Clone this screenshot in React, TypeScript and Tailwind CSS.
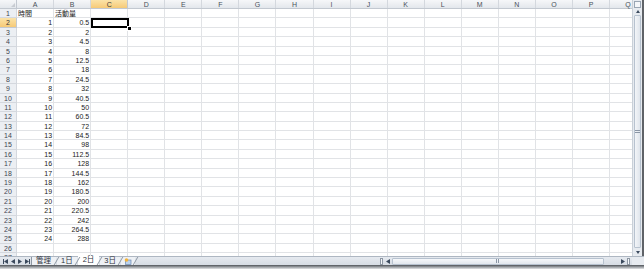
import React from "react";

const COLS = ["A", "B", "C", "D", "E", "F", "G", "H", "I", "J", "K", "L", "M", "N", "O", "P", "Q"];

function cellValue(row: number, col: number): string {
  if (row === 1) {
    if (col === 0) return "時間";
    if (col === 1) return "活動量";
    return "";
  }
  const n = row - 1;
  if (n > 24) return "";
  if (col === 0) return String(n);
  if (col === 1) return String(0.5 * n * n);
  return "";
}

function Tri({ dir }: { dir: "l" | "r" }) {
  return (
    <svg width="4" height="5" viewBox="0 0 4 5">
      {dir === "l" ? <path d="M4 0 L0 2.5 L4 5Z" fill="#3b4a5e" /> : <path d="M0 0 L4 2.5 L0 5Z" fill="#3b4a5e" />}
    </svg>
  );
}

export default function App() {
  const rows = Array.from({ length: 27 }, (_, i) => i + 1);

  return (
    <div className="w-[644px] h-[269px] overflow-hidden bg-white flex flex-col font-['Liberation_Sans','Noto_Sans_CJK_JP',sans-serif] text-[7px] text-[#1a1a1a]">
      <div className="flex h-[256px]">
        {/* GRID */}
        <div className="relative w-[632px] overflow-hidden">
          {/* column headers */}
          <div className="flex h-[9px] bg-gradient-to-b from-[#f6f7f9] to-[#e3e7ec] border-b border-[#c2c8d0]">
            <div className="w-[17px] shrink-0 border-r border-[#c2c8d0] flex items-end justify-end pr-[1px] pb-[1px]">
              <div className="w-0 h-0 border-l-[4px] border-l-transparent border-b-[4px] border-b-[#c8ccd2]" />
            </div>
            {COLS.map((c) => (
              <div
                key={c}
                className={
                  c === "C"
                    ? "w-[37.07px] shrink-0 border-r border-[#c2c8d0] bg-gradient-to-b from-[#fbe3a8] to-[#f6ca77] text-[#3a3a3a] text-center leading-[9px]"
                    : "w-[37.07px] shrink-0 border-r border-[#d4d8de] text-[#4a515b] text-center leading-[9px]"
                }
              >
                {c}
              </div>
            ))}
          </div>

          {/* rows */}
          {rows.map((r) => (
            <div key={r} className="flex h-[9.4px]">
              <div
                className={
                  r === 2
                    ? "w-[17px] shrink-0 border-r border-b border-[#c2c8d0] bg-gradient-to-b from-[#fbe3a8] to-[#f6ca77] text-[#3a3a3a] text-center leading-[9px]"
                    : "w-[17px] shrink-0 border-r border-b border-[#d4d8de] bg-[#eceff3] text-[#3f4650] text-center leading-[9px]"
                }
              >
                {r}
              </div>
              {COLS.map((c, ci) => {
                const v = cellValue(r, ci);
                const right = r > 1 && v !== "";
                return (
                  <div
                    key={c}
                    className={
                      right
                        ? "w-[37.07px] shrink-0 border-r border-b border-[#e1e3e6] text-right pr-[1px] leading-[9px] whitespace-nowrap overflow-hidden"
                        : "w-[37.07px] shrink-0 border-r border-b border-[#e1e3e6] text-left pl-[1px] leading-[9px] whitespace-nowrap overflow-visible"
                    }
                  >
                    {v}
                  </div>
                );
              })}
            </div>
          ))}

          {/* SELECTION C2 */}
          <div className="absolute left-[90.5px] top-[17.6px] w-[38px] h-[10.2px] border-2 border-black" />
          <div className="absolute left-[126.5px] top-[25.8px] w-[3px] h-[3px] bg-black border border-white box-content" />
        </div>

        {/* VERTICAL SCROLLBAR */}
        <div className="w-[10px] shrink-0 bg-[#e7ebf0] border-l border-[#c9d0d8] flex flex-col">
          <div className="h-[7px] mx-[1px] mt-[1px] border border-[#9aa6b4] bg-[#f4f6f9]" />
          <div className="h-[7px] flex items-center justify-center">
            <div className="w-0 h-0 border-l-[2.5px] border-r-[2.5px] border-b-[3px] border-l-transparent border-r-transparent border-b-[#3b4a5e]" />
          </div>
          <div className="flex-1 mx-[1px] rounded-[1px] border border-[#b7c2cf] bg-gradient-to-r from-[#f3f5f8] to-[#dfe5ec] flex items-center justify-center">
            <div className="w-[5px] h-[4px] bg-[repeating-linear-gradient(to_bottom,#8a96a5_0,#8a96a5_1px,transparent_1px,transparent_2px)]" />
          </div>
          <div className="h-[8px] flex items-center justify-center">
            <div className="w-0 h-0 border-l-[2.5px] border-r-[2.5px] border-t-[3px] border-l-transparent border-r-transparent border-t-[#3b4a5e]" />
          </div>
        </div>
        <div className="w-[2px] shrink-0 bg-[#5f6368]" />
      </div>

      {/* SHEET TABS + H SCROLL */}
      <div className="flex h-[9px] bg-gradient-to-b from-[#e6eaf0] to-[#d6dce4] border-t border-[#aeb7c2] items-stretch">
        <div className="w-[31px] shrink-0 flex items-center gap-[3px] pl-[3px]">
          <div className="flex items-center">
            <div className="w-[1px] h-[5px] bg-[#3b4a5e]" />
            <Tri dir="l" />
          </div>
          <Tri dir="l" />
          <Tri dir="r" />
          <div className="flex items-center">
            <Tri dir="r" />
            <div className="w-[1px] h-[5px] bg-[#3b4a5e]" />
          </div>
        </div>

        <div className="flex items-stretch text-[#2e3440] leading-[8px] text-[7.5px]">
          <div className="pl-[4px] pr-[5px] border-l border-[#8d97a3] bg-[#eef1f5]">管理</div>
          <div className="w-[1px] bg-[#8d97a3] skew-x-[-30deg]" />
          <div className="pl-[4px] pr-[4px] bg-[#eef1f5]">1日</div>
          <div className="w-[1px] bg-[#8d97a3] skew-x-[-30deg]" />
          <div className="px-[5px] bg-white -mt-[1px]">2日</div>
          <div className="w-[1px] bg-[#8d97a3] skew-x-[-30deg]" />
          <div className="px-[4px] bg-[#eef1f5]">3日</div>
          <div className="w-[1px] bg-[#8d97a3] skew-x-[-30deg]" />
          <div className="px-[3px] bg-[#eef1f5] flex items-center">
            <svg width="8" height="7" viewBox="0 0 8 7">
              <rect x="1.5" y="2" width="5.5" height="4.5" fill="#bcd3ee" stroke="#6a88b0" strokeWidth="0.7" />
              <circle cx="2.5" cy="2" r="1.8" fill="#f2b33d" />
            </svg>
          </div>
          <div className="w-[1px] bg-[#8d97a3] skew-x-[-30deg]" />
        </div>

        <div className="flex-1" />

        {/* horizontal scrollbar */}
        <div className="w-[252px] shrink-0 flex items-center pr-[2px]">
          <div className="w-[3px] h-[7px] border border-[#8d97a3] bg-[#f4f6f9]" />
          <div className="w-[9px] flex items-center justify-center">
            <Tri dir="l" />
          </div>
          <div className="w-[212px] h-[7px] rounded-[1px] border border-[#b7c2cf] bg-gradient-to-b from-[#f6f8fa] to-[#e2e7ee] flex items-center justify-center">
            <div className="w-[4px] h-[4px] bg-[repeating-linear-gradient(to_right,#8a96a5_0,#8a96a5_1px,transparent_1px,transparent_2px)]" />
          </div>
          <div className="flex-1 flex items-center justify-end pr-[2px]">
            <Tri dir="r" />
          </div>
          <div className="w-[3px] h-[7px] border border-[#8d97a3] bg-[#f4f6f9]" />
        </div>
        <div className="w-[12px] shrink-0 bg-[#e7ebf0]" />
      </div>

      {/* window shadow */}
      <div className="flex-1 bg-gradient-to-b from-[#4f5358] via-[#9a9ea3] to-[#e2e3e5]" />
    </div>
  );
}
